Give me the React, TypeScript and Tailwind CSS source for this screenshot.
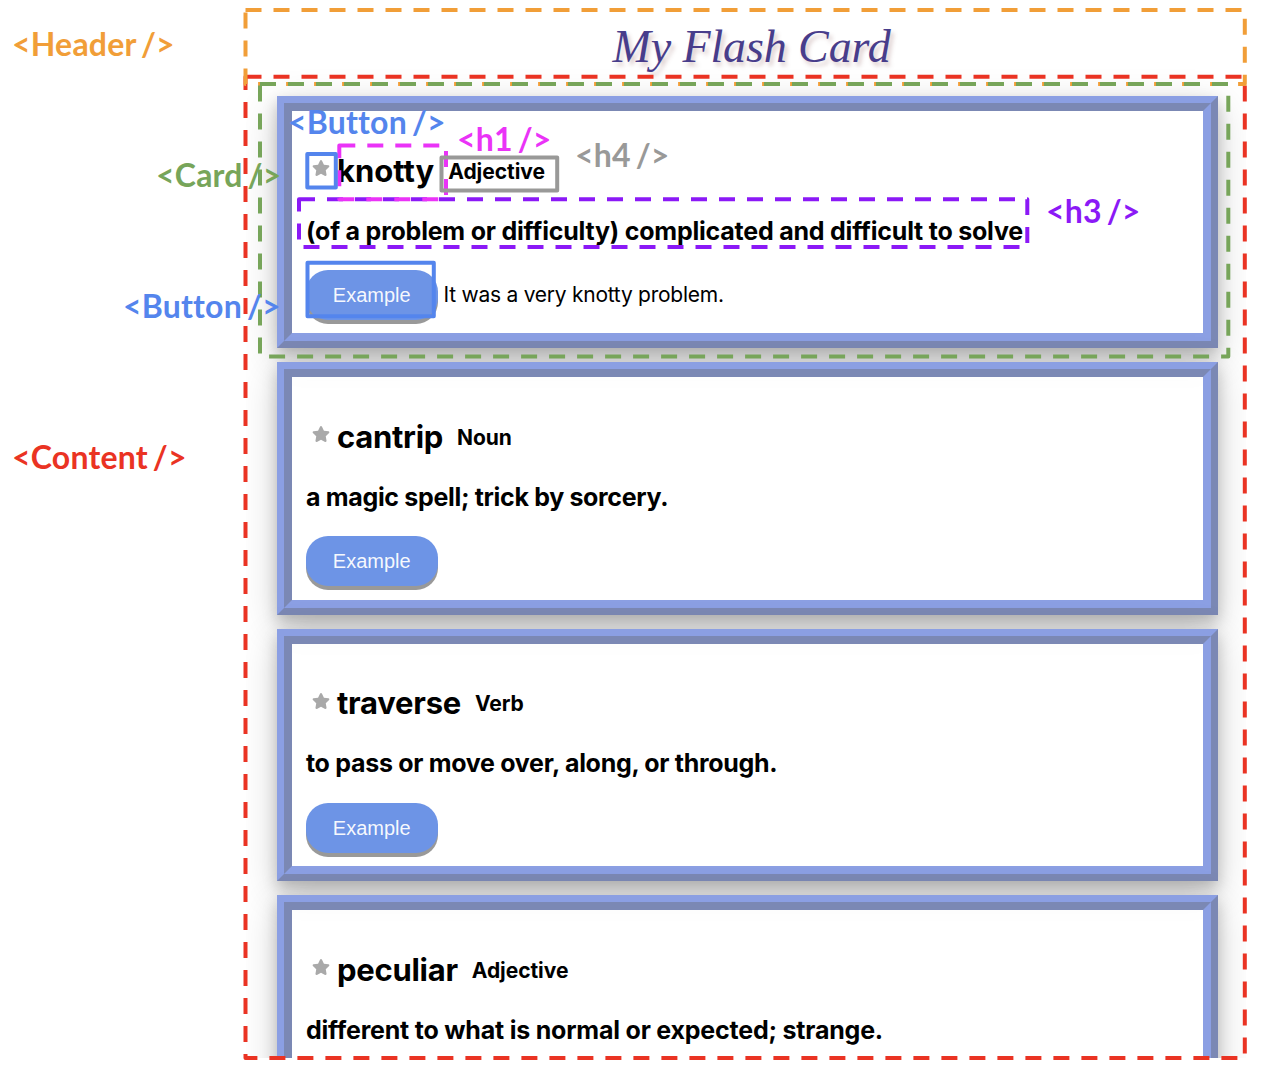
import { FaStar } from 'react-icons/fa';

type Word = {
  word: string;
  wordClass: string;
  kind: string;
  meaning: string;
  meaningClass: string;
  example?: string;
  cropped?: boolean;
};

const words: Word[] = [
  {
    word: 'knotty',
    wordClass: 'tracking-normal',
    kind: 'Adjective',
    meaning: '(of a problem or difficulty) complicated and difficult to solve',
    meaningClass: 'tracking-[-0.22px]',
    example: 'It was a very knotty problem.',
  },
  {
    word: 'cantrip',
    wordClass: 'tracking-[-0.28px]',
    kind: 'Noun',
    meaning: 'a magic spell; trick by sorcery.',
    meaningClass: 'tracking-[-0.33px]',
  },
  {
    word: 'traverse',
    wordClass: 'tracking-[-0.25px]',
    kind: 'Verb',
    meaning: 'to pass or move over, along, or through.',
    meaningClass: 'tracking-[-0.3px]',
  },
  {
    word: 'peculiar',
    wordClass: 'tracking-[-0.28px]',
    kind: 'Adjective',
    meaning: 'different to what is normal or expected; strange.',
    meaningClass: 'tracking-[-0.21px]',
    cropped: true,
  },
];

function Card({ item }: { item: Word }) {
  return (
    <article className="h-[252.3px] w-[941px] shrink-0 border-[7px] border-t-[#8b9fe3] border-l-[#8b9fe3] border-r-[#7b88b4] border-b-[#7b88b4] shadow-[0_7px_14px_rgba(0,0,0,0.2),0_11px_36px_rgba(0,0,0,0.19)]">
      <div className="h-full border-8 border-t-[#7b88b4] border-l-[#7b88b4] border-r-[#8b9fe3] border-b-[#8b9fe3] bg-white/70 bg-clip-padding px-[14px] pt-[36px] whitespace-nowrap">
        <div className="flex h-[48px] items-center">
          <button className="mb-[6px] ml-[6px] flex w-[25px] text-[#a9a9a9]">
            <FaStar size={18} />
          </button>
          <h1 className={`text-[31px] font-bold ${item.wordClass}`}>{item.word}</h1>
          <h4 className="mt-px ml-[14px] text-[21px] font-bold tracking-[-0.05px]">{item.kind}</h4>
        </div>
        <h3 className={`mt-[12.5px] flex h-[48px] items-center text-[25px] font-bold ${item.meaningClass}`}>{item.meaning}</h3>
        {!item.cropped && (
          <div className="mt-[14.5px] flex items-center">
            <button className="h-[50px] w-[131.5px] rounded-[22px] bg-[#6d94e6] font-['Liberation_Sans',sans-serif] text-[20px] text-white/95 shadow-[0_4px_#999]">
              Example
            </button>
            {item.example && <p className="ml-[6px] text-[21px] tracking-[-0.25px]">{item.example}</p>}
          </div>
        )}
      </div>
    </article>
  );
}

const labels = [
  { text: '<Header />', className: 'left-[12px] top-[24px] text-[#f19e38]' },
  { text: '<Card />', className: 'left-[156px] top-[155px] text-[#77a55a]' },
  { text: '<Button />', className: 'left-[288px] top-[102px] text-[#5485ed]' },
  { text: '<h1 />', className: 'left-[457px] top-[119px] text-[#ea33f7]' },
  { text: '<h4 />', className: 'left-[575px] top-[135px] text-[#999998]' },
  { text: '<h3 />', className: 'left-[1046px] top-[191px] text-[#8b19f6]' },
  { text: '<Button />', className: 'left-[123px] top-[286px] text-[#5485ed]' },
  { text: '<Content />', className: 'left-[12px] top-[437px] text-[#ea3323]' },
];

function Outlines() {
  return (
    <svg className="pointer-events-none absolute inset-0" width="1272" height="1070" fill="none" strokeWidth="4" strokeLinejoin="round">
      <g strokeDasharray="16 12">
        <rect x="245.5" y="76.7" width="999.3" height="981.3" stroke="#ea3323" />
        <rect x="245.5" y="10" width="999.3" height="74" stroke="#f19e38" />
        <rect x="260" y="84" width="968.3" height="272.5" stroke="#77a55a" />
        <rect x="299" y="199.2" width="728.3" height="47.9" stroke="#8b19f6" />
        <rect x="339.3" y="145.6" width="106.7" height="53.6" stroke="#ea33f7" />
      </g>
      <rect x="307.3" y="154" width="28.5" height="33.5" stroke="#5485ed" />
      <rect x="441.5" y="157.5" width="115.7" height="33" stroke="#999998" />
      <rect x="307.5" y="262.7" width="126.3" height="53.5" stroke="#5485ed" />
    </svg>
  );
}

export default function App() {
  return (
    <div className="relative h-[1070px] w-[1272px] overflow-hidden bg-white font-['Inter',sans-serif] text-black">
      <main className="ml-[246px] flex h-[1058px] w-[1000px] flex-col overflow-hidden">
        <header className="flex h-[95.8px] shrink-0 items-start justify-center pt-[17px] pl-[11px]">
          <span className="font-['Liberation_Serif',serif] text-[46px] leading-[60px] tracking-[-0.1px] whitespace-nowrap text-[#483d8b] italic [text-shadow:3px_4px_4px_rgba(140,90,90,0.3)]">
            My Flash Card
          </span>
        </header>
        <section className="ml-[31px] flex flex-col gap-[14.15px]">
          {words.map((item) => (
            <Card key={item.word} item={item} />
          ))}
        </section>
      </main>
      <Outlines />
      {labels.map((label, i) => (
        <span
          key={i}
          className={`absolute font-['Lato',sans-serif] text-[32px] leading-[40px] font-bold tracking-[0.2px] whitespace-nowrap [word-spacing:-3px] ${label.className}`}
        >
          {label.text}
        </span>
      ))}
    </div>
  );
}
